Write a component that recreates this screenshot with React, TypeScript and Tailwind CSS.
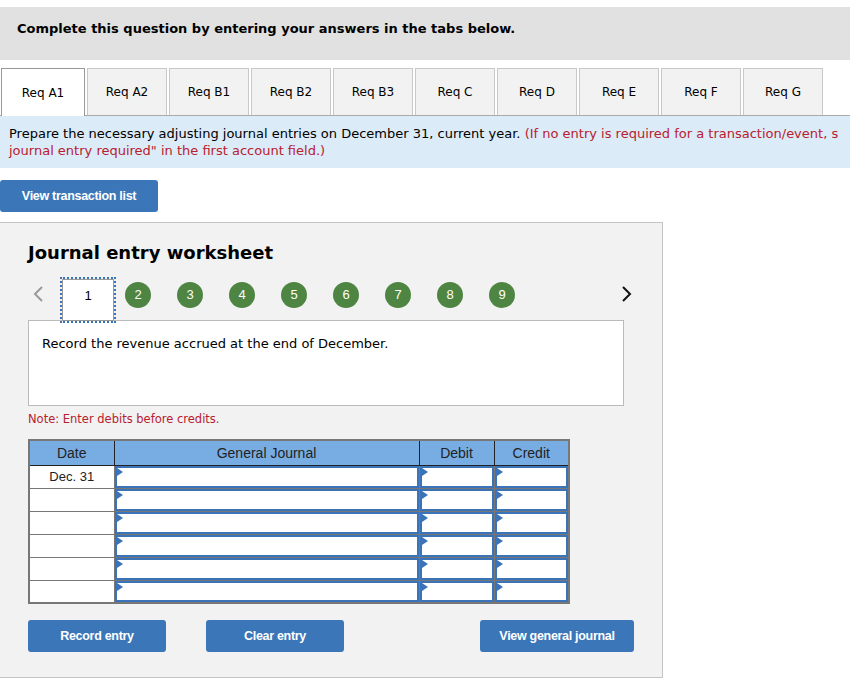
const TABS = ["Req A1", "Req A2", "Req B1", "Req B2", "Req B3", "Req C", "Req D", "Req E", "Req F", "Req G"];
const STEPS = [2, 3, 4, 5, 6, 7, 8, 9];
const ROWS = ["Dec. 31", "", "", "", "", ""];

const verdana = "font-['DejaVu_Sans',Verdana,sans-serif]";
const arial = "font-['Liberation_Sans',Arial,sans-serif]";

function Marker() {
  return (
    <span className="absolute left-0 top-0 h-0 w-0 border-y-[4px] border-l-[6px] border-y-transparent border-l-[#3b73b9]" />
  );
}

function InputCell() {
  return (
    <td className="h-[23px] border border-[#777] p-0">
      <div className="relative h-full w-full border-2 border-[#3b73b9] bg-white">
        <Marker />
      </div>
    </td>
  );
}

function BlueButton({ label, className }: { label: string; className: string }) {
  return (
    <button
      className={`flex h-[32px] items-center justify-center rounded-[3px] bg-[#3a76b8] text-[12.5px] font-bold tracking-[-0.3px] text-white ${arial} ${className}`}
    >
      {label}
    </button>
  );
}

export default function App() {
  return (
    <div className={`h-[684px] w-[850px] overflow-hidden bg-white text-black ${verdana}`}>
      {/* question banner */}
      <div className="mt-[7px] h-[53px] bg-[#e1e1e1] pl-[17px] pt-[13px] text-[13px] font-bold leading-[18px]">
        Complete this question by entering your answers in the tabs below.
      </div>

      {/* tabs */}
      <div className="mt-[8px] flex gap-[2px] border-b border-[#aaa] pl-[1px]">
        {TABS.map((t, i) =>
          i === 0 ? (
            <div
              key={t}
              className="-mb-px flex h-[48px] w-[84px] items-center justify-center border border-b-0 border-[#999] bg-white text-[12px]"
            >
              {t}
            </div>
          ) : (
            <div
              key={t}
              className="flex h-[47px] w-[80px] items-center justify-center border border-b-0 border-[#c8c8c8] bg-[#f2f2f2] text-[12px]"
            >
              {t}
            </div>
          ),
        )}
      </div>

      {/* instructions */}
      <div className="h-[52px] overflow-hidden bg-[#dcebf8] px-[9px] pt-[9px] text-[13px] leading-[17px] whitespace-nowrap">
        Prepare the necessary adjusting journal entries on December 31, current year.{" "}
        <span className="text-[#b8202e]">(If no entry is required for a transaction/event, s</span>
        <br />
        <span className="text-[#b8202e]">journal entry required" in the first account field.)</span>
      </div>

      <BlueButton label="View transaction list" className="mt-[12px] w-[158px]" />

      {/* worksheet panel */}
      <div className="mt-[10px] h-[456px] w-[663px] border border-l-0 border-[#c4c4c4] bg-[#f2f2f2] pl-[28px]">
        <h2 className="mt-[18px] text-[18px] font-bold leading-[24px]">Journal entry worksheet</h2>

        <div className="mt-[14px] flex h-[42px] items-start">
          <span className="ml-[4px] mt-[6px] w-[30px] text-[#999]">
            <svg width="12" height="18" viewBox="0 0 12 18" fill="none">
              <path d="M10 2 3 9l7 7" stroke="currentColor" strokeWidth="2" />
            </svg>
          </span>
          <div className="relative z-10 flex h-[42px] w-[52px] items-center justify-center border border-[#999] bg-white text-[13px] outline-2 outline-offset-0 outline-dotted outline-[#3b73b9]">
            <span className={`${arial} -mt-[8px]`}>1</span>
          </div>
          <div className="ml-[11px] mt-[3px] flex gap-[26px]">
            {STEPS.map((n) => (
              <span
                key={n}
                className={`flex h-[26px] w-[26px] items-center justify-center rounded-full bg-[#4e8542] text-[13px] text-white ${arial}`}
              >
                {n}
              </span>
            ))}
          </div>
          <span className="ml-[106px] mt-[6px]">
            <svg width="12" height="18" viewBox="0 0 12 18" fill="none">
              <path d="M2 2l7 7-7 7" stroke="#111" strokeWidth="2" />
            </svg>
          </span>
        </div>

        <div className="-mt-px h-[86px] w-[596px] border border-[#bbb] bg-white px-[13px] pt-[13px] text-[13px]">
          Record the revenue accrued at the end of December.
        </div>

        <p className="mt-[5px] text-[11.5px] text-[#b8202e]">Note: Enter debits before credits.</p>

        <table className={`mt-[11px] border-collapse border-2 border-[#777] text-[13px] ${arial}`}>
          <colgroup>
            <col className="w-[85px]" />
            <col className="w-[305px]" />
            <col className="w-[75px]" />
            <col className="w-[75px]" />
          </colgroup>
          <thead>
            <tr className="h-[25px] bg-[#78ade3] text-[14px] text-[#222]">
              <th className="border-b border-r border-[#222] font-normal">Date</th>
              <th className="border-b border-r border-[#222] font-normal">General Journal</th>
              <th className="border-b border-r border-[#222] font-normal">Debit</th>
              <th className="border-b border-[#222] font-normal">Credit</th>
            </tr>
          </thead>
          <tbody>
            {ROWS.map((d, i) => (
              <tr key={i}>
                <td className="h-[23px] border border-[#777] bg-white p-0 text-center text-[#222]">{d}</td>
                <InputCell />
                <InputCell />
                <InputCell />
              </tr>
            ))}
          </tbody>
        </table>

        <div className="mt-[16px] flex">
          <BlueButton label="Record entry" className="w-[138px]" />
          <BlueButton label="Clear entry" className="ml-[40px] w-[138px]" />
          <BlueButton label="View general journal" className="ml-[136px] w-[154px]" />
        </div>
      </div>
    </div>
  );
}
